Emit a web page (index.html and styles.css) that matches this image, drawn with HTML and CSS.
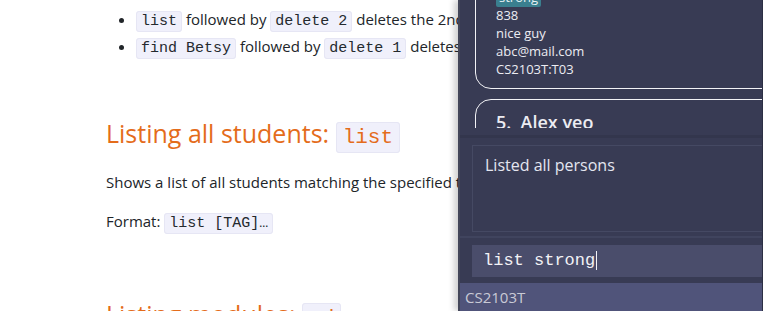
FILE: index.html
```html
<!DOCTYPE html>
<html lang="en">
<head>
  <meta charset="UTF-8" />
  <title>User Guide</title>
  <link rel="stylesheet" href="styles.css">
</head>
<body>

  <div class="screen">
    <!-- user guide page (behind the app window) -->
    <div class="guide">
      <ul class="examples">
        <li><code>list</code> followed by <code>delete 2</code> deletes the 2nd student in the address book.</li>
        <li><code>find Betsy</code> followed by <code>delete 1</code> deletes the 1st student in the results.</li>
      </ul>

      <h2 class="section-title">Listing all students: <code>list</code></h2>
      <p>Shows a list of all students matching the specified tags.</p>
      <p>Format: <code>list [TAG]…</code></p>

      <h2 class="section-title">Listing modules: <code>ad</code></h2>
    </div>

    <!-- app window -->
    <div class="app">
      <div class="person-list">
        <div class="person-view">
          <div class="person-scroll">
            <div class="card">
              <div class="tags"><span class="tag">strong</span></div>
              <div class="field">838</div>
              <div class="field">nice guy</div>
              <div class="field">abc@mail.com</div>
              <div class="field">CS2103T:T03</div>
            </div>
            <div class="card">
              <div class="name">5.&nbsp; Alex yeo</div>
            </div>
          </div>
        </div>
      </div>

      <div class="result-pane">
        <div class="result-box">Listed all persons</div>
      </div>

      <div class="command-pane">
        <div class="command-box"><span class="caret">list strong</span></div>
      </div>

      <div class="status-bar">CS2103T</div>
    </div>
  </div>

</body>
</html>
```

FILE: styles.css
```css
* {
  margin: 0;
  padding: 0;
  box-sizing: border-box;
}

html, body {
  height: 100%;
  background: #ffffff;
  overflow: hidden;
}

.screen {
  display: flex;
  height: 311px;
  width: 763px;
}

/* === user guide === */
.guide {
  width: 458px;
  flex-shrink: 0;
  overflow: hidden;
  white-space: nowrap;
  padding-left: 106px;
  font-family: "Open Sans", "Noto Sans", sans-serif;
  font-size: 15px;
  color: #212529;
}

.guide code {
  font-family: "Liberation Mono", "DejaVu Sans Mono", monospace;
  font-size: 15px;
  background: #f0f0fb;
  border: 1px solid #e6e6f4;
  border-radius: 3px;
  padding: 1px 4px;
  color: #24292e;
}

.examples {
  padding-left: 30px;
  margin-top: 7px;
  list-style: disc;
}

.examples li {
  line-height: 24px;
}

.section-title {
  font-weight: 400;
  font-size: 25px;
  color: #e46c1b;
  margin-top: 54px;
  line-height: 36px;
}

.section-title code {
  font-size: 21px;
  color: #e46c1b;
  padding: 3px 6px;
}

.guide p {
  line-height: 24px;
  margin-top: 14px;
}

.guide p + p {
  margin-top: 15px;
}

.guide p + .section-title {
  margin-top: 60px;
}

/* === app window === */
.app {
  flex: 1;
  display: flex;
  flex-direction: column;
  background: #383b54;
  border-left: 2px solid #44475a;
  border-right: 1px solid #2c2f44;
  box-shadow: -4px 0 6px rgba(0, 0, 0, 0.18);
  font-family: "Open Sans", "Noto Sans", sans-serif;
  color: #ececf2;
  overflow: hidden;
  z-index: 1;
}

.person-list {
  height: 135px;
  padding-bottom: 7px;
}

.person-view {
  height: 128px;
  overflow: hidden;
  padding-left: 15px;
}

.person-scroll {
  margin-top: -17px;
  margin-right: -30px;
}

.card {
  border: 1px solid #f2f2f6;
  border-radius: 16px;
  padding: 0 0 10px 20px;
  margin-bottom: 10px;
}

.tags {
  height: 22px;
  padding-top: 1px;
}

.tag {
  display: inline-block;
  background: #3a7f8f;
  color: #e8f2f5;
  font-size: 13px;
  line-height: 20px;
  padding: 0 3px;
  border-radius: 2px;
}

.field {
  font-size: 13px;
  line-height: 18px;
}

.name {
  font-size: 18px;
  font-weight: 600;
  padding-top: 9px;
  line-height: 26px;
}

.result-pane {
  height: 103px;
  padding: 7px 0 4px 12px;
  border-top: 3px solid #33364d;
  border-bottom: 2px solid #40445e;
}

.result-box {
  height: 100%;
  border: 1px solid #454963;
  border-right: none;
  padding: 7px 12px;
  font-size: 16px;
  line-height: 24px;
  color: #e4e6f0;
}

.command-pane {
  height: 45px;
  padding: 7px 0 6px 12px;
}

.command-box {
  height: 32px;
  background: #4a4d6b;
  padding-left: 11px;
  font-family: "Liberation Mono", "DejaVu Sans Mono", monospace;
  font-size: 17px;
  line-height: 32px;
  color: #f2f2f6;
}

.caret {
  border-right: 1px solid #f2f2f6;
  padding-right: 1px;
}

.status-bar {
  flex: 1;
  background: #50547a;
  padding-left: 5px;
  font-size: 15px;
  line-height: 28px;
  color: #c9cad6;
}
```
